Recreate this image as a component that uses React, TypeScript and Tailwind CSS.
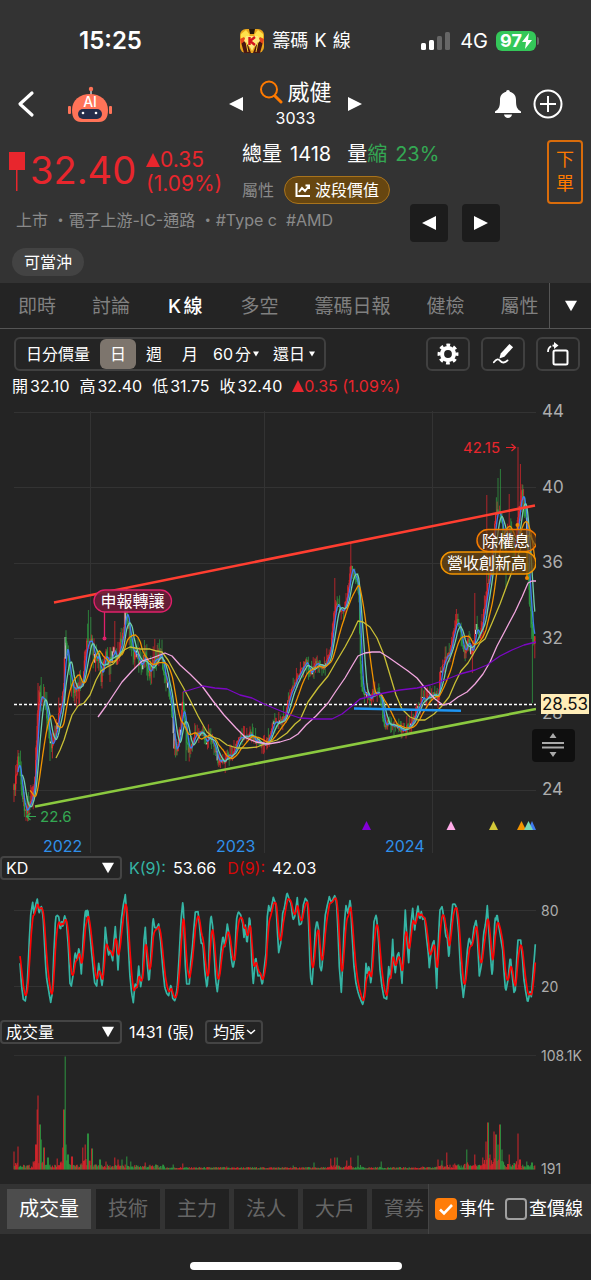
import { useState } from 'react'
import type { ReactNode } from 'react'
import { clsx } from 'clsx'

type Point = [number, number]

const TABS = ['即時', '討論', 'K線', '多空', '籌碼日報', '健檢', '屬性']
const INDICATORS = ['成交量', '技術', '主力', '法人', '大戶', '資券']

const RED = '#e8262d'
const GREEN = '#2fa344'
const STEP = 0.8

// Price path in chart units: x is time, y is the price level (44 at 412, 24 at 790).
const PRICE: Point[] = [
  [14, 790], [16, 778], [18, 757], [20, 775], [22, 790], [24, 804], [26, 810], [29, 805], [31, 800],
  [34, 788], [36, 760], [38, 705], [40, 692], [41, 705], [43, 690], [45, 702], [47, 715], [49, 735],
  [52, 750], [54, 742], [57, 725], [59, 712], [62, 708], [64, 680], [65, 640], [67, 655], [69, 665],
  [71, 688], [74, 692], [77, 688], [80, 690], [83, 682], [85, 652], [88, 640], [91, 637], [93, 655],
  [96, 660], [99, 655], [101, 678], [104, 665], [106, 652], [108, 662], [112, 657], [114, 650],
  [117, 662], [120, 645], [123, 636], [126, 604], [128, 622], [131, 640], [134, 655], [138, 655],
  [141, 668], [145, 655], [149, 675], [153, 660], [156, 660], [160, 652], [163, 666], [166, 682],
  [169, 692], [172, 712], [174, 748], [177, 750], [180, 730], [183, 702], [186, 732], [188, 750],
  [191, 747], [195, 735], [198, 732], [202, 732], [206, 743], [210, 735], [214, 745], [218, 760],
  [223, 762], [228, 755], [232, 757], [236, 745], [240, 738], [245, 737], [250, 733], [254, 740],
  [259, 742], [264, 745], [268, 740], [272, 725], [276, 720], [280, 722], [285, 715], [288, 700],
  [292, 690], [296, 680], [300, 672], [306, 662], [311, 673], [316, 661], [320, 668], [325, 665],
  [330, 655], [333, 622], [336, 602], [339, 608], [343, 612], [346, 600], [349, 584], [351, 565],
  [354, 576], [357, 577], [359, 600], [360, 660], [362, 690], [365, 693], [370, 697], [374, 693],
  [377, 690], [381, 700], [384, 725], [388, 723], [393, 724], [398, 727], [402, 730], [406, 728],
  [410, 724], [414, 717], [418, 708], [422, 695], [426, 700], [430, 696], [434, 694], [438, 698],
  [441, 670], [445, 660], [449, 656], [452, 640], [456, 620], [460, 628], [464, 655], [468, 640],
  [472, 656], [476, 625], [480, 640], [484, 608], [487, 590], [490, 570], [493, 545], [496, 510],
  [500, 515], [503, 532], [506, 543], [509, 532], [512, 545], [515, 552], [518, 515], [520, 497],
  [522, 493], [524, 503], [526, 520], [528, 570], [530, 605], [532, 625], [534, 642], [536, 640],
]

const HIGHS: Point[] = [
  [18, 750], [41, 677], [38, 683], [65, 620], [88, 610], [91, 617], [126, 590], [115, 621], [144, 640],
  [158, 643], [351, 543], [335, 578], [487, 495], [496, 498], [498, 478], [500, 469], [509, 494],
  [518, 447], [520, 464], [456, 609], [475, 593], [376, 675], [422, 688],
]

const LOWS: Point[] = [
  [26, 816], [50, 761], [101, 686], [174, 760], [186, 761], [217, 772], [402, 737], [472, 673],
  [506, 587], [532, 703],
]

const MA60: Point[] = [
  [56, 758], [60, 750], [64, 740], [68, 727], [72, 715], [78, 706], [84, 703], [90, 695], [96, 680],
  [101, 671], [107, 667], [113, 664], [118, 658], [124, 650], [130, 647], [140, 649], [150, 649],
  [157, 651], [162, 652], [168, 660], [175, 673], [183, 687], [190, 700], [198, 716], [207, 732],
  [213, 737], [219, 739], [227, 745], [237, 748], [247, 748], [257, 747], [267, 743], [277, 740],
  [287, 733], [295, 724], [300, 720], [308, 702], [318, 688], [328, 676], [336, 662], [345, 647],
  [352, 634], [358, 621], [363, 622], [370, 627], [377, 638], [384, 655], [390, 675], [396, 695],
  [402, 709], [410, 717], [418, 720], [425, 720], [434, 714], [441, 707], [449, 697], [455, 683],
  [461, 671], [468, 663], [475, 651], [480, 643], [485, 639], [492, 623], [500, 604], [507, 585],
  [514, 566], [520, 550], [526, 537], [530, 535], [535, 545],
]

const MA120: Point[] = [
  [98, 717], [106, 706], [114, 694], [122, 682], [132, 671], [142, 661], [152, 658], [160, 655],
  [165, 653], [172, 656], [180, 665], [190, 674], [202, 686], [213, 701], [224, 715], [236, 728],
  [246, 738], [256, 742], [268, 744], [280, 742], [290, 739], [298, 734], [306, 725], [316, 716],
  [328, 703], [336, 691], [345, 678], [352, 666], [358, 656], [365, 653], [372, 652], [380, 652],
  [388, 657], [398, 664], [408, 671], [417, 678], [425, 688], [435, 699], [443, 705], [450, 703],
  [458, 697], [467, 692], [475, 684], [483, 674], [490, 662], [497, 646], [506, 629], [515, 612],
  [522, 597], [528, 583], [532, 581], [536, 581],
]

const MA240: Point[] = [
  [183, 692], [193, 689], [203, 686], [215, 688], [227, 689], [240, 695], [252, 698], [264, 704],
  [276, 709], [288, 714], [300, 718], [316, 719], [332, 719], [342, 714], [352, 706], [360, 699],
  [372, 696], [384, 693], [400, 690], [417, 688], [430, 685], [445, 680], [460, 674], [475, 670],
  [487, 665], [500, 656], [512, 650], [524, 645], [532, 643], [536, 642],
]

// K line at triple resolution.
const K_LINE: Point[] = [
  [60, 340], [65, 410], [70, 448], [76, 453], [82, 400], [88, 270], [92, 195], [98, 157], [102, 190],
  [108, 160], [112, 147], [117, 192], [121, 175], [125, 168], [130, 210], [134, 290], [139, 380],
  [144, 410], [152, 457], [157, 430], [162, 300], [167, 200], [172, 196], [177, 202], [181, 245],
  [185, 208], [189, 235], [193, 195], [199, 212], [205, 290], [210, 400], [214, 408], [220, 370],
  [225, 305], [231, 330], [237, 290], [244, 372], [250, 260], [255, 188], [258, 182], [260, 200],
  [263, 172], [268, 230], [273, 285], [279, 350], [284, 398], [290, 408], [296, 340], [301, 375],
  [307, 412], [311, 330], [316, 232], [322, 290], [326, 315], [331, 300], [338, 332], [342, 270],
  [346, 230], [350, 290], [354, 360], [358, 290], [364, 210], [369, 170], [376, 134], [380, 190],
  [385, 290], [390, 380], [395, 430], [400, 458], [405, 400], [411, 415], [416, 348], [422, 410],
  [428, 370], [432, 270], [436, 232], [441, 330], [447, 402], [452, 330], [459, 200], [464, 232],
  [470, 235], [476, 222], [482, 275], [488, 350], [494, 410], [500, 430], [506, 437], [513, 402],
  [518, 445], [525, 453], [532, 410], [538, 310], [543, 210], [549, 148], [552, 220], [555, 330],
  [560, 402], [568, 402], [572, 340], [577, 295], [582, 230], [586, 186], [594, 185], [599, 230],
  [603, 280], [609, 280], [614, 360], [621, 418], [626, 350], [629, 240], [633, 192], [638, 230],
  [643, 320], [647, 390], [652, 425], [658, 370], [663, 300], [669, 255], [674, 290], [682, 222],
  [688, 260], [693, 320], [699, 357], [705, 320], [709, 210], [715, 185], [722, 195], [728, 220],
  [732, 262], [736, 225], [741, 287], [749, 192], [753, 270], [757, 370], [760, 400], [767, 317],
  [774, 378], [781, 375], [787, 407], [793, 350], [798, 310], [802, 200], [806, 167], [811, 187],
  [820, 142], [828, 165], [832, 240], [836, 308], [842, 280], [848, 190], [853, 175], [861, 127],
  [868, 150], [873, 160], [879, 210], [884, 200], [892, 143], [897, 225], [905, 220], [910, 165],
  [916, 145], [923, 155], [927, 250], [931, 380], [936, 403], [941, 330], [946, 240], [951, 210],
  [956, 240], [960, 350], [965, 365], [970, 290], [975, 200], [981, 170], [988, 140], [994, 158],
  [1004, 137], [1009, 150], [1013, 220], [1018, 350], [1024, 427], [1029, 320], [1033, 220],
  [1038, 167], [1044, 190], [1051, 145], [1056, 250], [1062, 350], [1068, 400], [1075, 430],
  [1083, 452], [1089, 465], [1094, 420], [1098, 340], [1102, 370], [1107, 346], [1113, 408],
  [1118, 300], [1122, 215], [1129, 193], [1135, 260], [1140, 360], [1146, 410], [1152, 443],
  [1160, 447], [1166, 350], [1172, 385], [1178, 268], [1182, 340], [1186, 368], [1191, 318],
  [1196, 308], [1201, 340], [1206, 400], [1211, 280], [1216, 180], [1221, 270], [1226, 338],
  [1232, 230], [1238, 175], [1244, 240], [1250, 190], [1254, 168], [1259, 210], [1264, 185],
  [1268, 208], [1274, 205], [1280, 268], [1285, 310], [1288, 353], [1294, 300], [1298, 280],
  [1302, 272], [1306, 330], [1310, 415], [1315, 270], [1320, 180], [1326, 170], [1333, 210],
  [1337, 258], [1342, 265], [1347, 332], [1352, 230], [1358, 163], [1365, 162], [1370, 175],
  [1376, 250], [1382, 370], [1390, 442], [1396, 390], [1401, 310], [1407, 262], [1415, 290],
  [1422, 232], [1429, 208], [1433, 280], [1438, 378], [1445, 340], [1451, 250], [1457, 220],
  [1462, 167], [1467, 250], [1473, 340], [1477, 383], [1482, 260], [1485, 202], [1488, 210],
  [1491, 190], [1496, 225], [1502, 262], [1508, 300], [1513, 380], [1517, 425], [1524, 390],
  [1531, 318], [1537, 380], [1542, 427], [1546, 420], [1550, 330], [1554, 270], [1562, 270],
  [1567, 320], [1572, 390], [1578, 430], [1583, 458], [1590, 425], [1594, 440], [1600, 360],
  [1606, 283],
]

// Volume peaks: x and bar height.
const VOLUME_PEAKS: Point[] = [
  [14, 18], [18, 23], [33, 8], [36, 25], [37, 60], [38, 74], [40, 45], [41, 30], [44, 22], [48, 12],
  [57, 11], [63, 22], [64, 60], [65, 113], [66, 25], [68, 15], [72, 13], [83, 22], [85, 25], [88, 36],
  [92, 21], [100, 10], [106, 8], [115, 12], [118, 10], [122, 10], [127, 13], [131, 8], [145, 7],
  [158, 4], [173, 5], [183, 6], [227, 3], [293, 4], [314, 7], [331, 11], [335, 12], [337, 12],
  [347, 9], [351, 12], [358, 14], [381, 8], [423, 3], [438, 10], [442, 9], [447, 17], [455, 6],
  [467, 20], [475, 15], [483, 12], [486, 28], [488, 47], [490, 15], [494, 38], [496, 35], [498, 25],
  [500, 45], [502, 20], [509, 15], [518, 36], [520, 10], [527, 8], [532, 7],
]

function valueAt(points: Point[], x: number): number {
  const i = points.findIndex((p) => p[0] >= x)
  if (i <= 0) return i === 0 ? points[0][1] : points[points.length - 1][1]
  const [x0, y0] = points[i - 1]
  const [x1, y1] = points[i]
  return y0 + ((y1 - y0) * (x - x0)) / (x1 - x0)
}

function noise(seed: number): number {
  const v = Math.sin(seed * 12.9898) * 43758.5453
  return v - Math.floor(v)
}

function toPath(points: Point[]): string {
  return points.map(([x, y], i) => `${i === 0 ? 'M' : 'L'}${x.toFixed(1)} ${y.toFixed(1)}`).join('')
}

interface Candle {
  x: number
  open: number
  close: number
  high: number
  low: number
}

function buildCandles(): Candle[] {
  const candles: Candle[] = []
  let previous = PRICE[0][1]
  for (let i = 0; 14 + i * STEP <= 535.5; i++) {
    const x = 14 + i * STEP
    const swing = x > 480 || x < 165 ? 11 : 7
    const close = valueAt(PRICE, x) + (noise(i) - 0.5) * swing
    candles.push({
      x,
      open: previous,
      close,
      high: Math.min(previous, close) - noise(i + 900) ** 2 * swing * 1.6,
      low: Math.max(previous, close) + noise(i + 1800) ** 2 * swing * 1.5,
    })
    previous = close
  }
  for (const [x, y] of HIGHS) {
    const c = candles[Math.round((x - 14) / STEP)]
    c.high = Math.min(c.high, y)
  }
  for (const [x, y] of LOWS) {
    const c = candles[Math.round((x - 14) / STEP)]
    c.low = Math.max(c.low, y)
  }
  return candles
}

function average(candles: Candle[], days: number): Point[] {
  return candles.slice(days).map((c, i) => {
    const window = candles.slice(i + 1, i + days + 1)
    return [c.x, window.reduce((sum, w) => sum + w.close, 0) / days]
  })
}

function buildKd() {
  const k: Point[] = []
  const d: Point[] = []
  let smooth = 310
  for (let x = 60; x <= 1606; x += 2) {
    const y = valueAt(K_LINE, x)
    smooth += (y - smooth) * 0.29
    k.push([x / 3, 850 + y / 3])
    d.push([x / 3, 850 + smooth / 3])
  }
  return { k, d }
}

function volumeHeight(x: number, i: number): number {
  let height = 1 + noise(i + 77) * (x < 165 || x > 435 ? 4 : 1.5)
  for (const [px, peak] of VOLUME_PEAKS) {
    const gap = Math.abs(px - x)
    if (gap < 0.5) height = Math.max(height, peak)
    else if (gap < 7) height = Math.max(height, Math.min(peak, 30) * 0.5 * noise(i + px) * (1 - gap / 7))
  }
  return height
}

const CANDLES = buildCandles()
const KD = buildKd()

function Triangle({ className, d }: { className?: string; d: string }) {
  return (
    <svg viewBox="0 0 14 14" className={className} fill="currentColor" aria-hidden="true">
      <path d={d} />
    </svg>
  )
}

const LEFT = 'M0 7 14 0V14Z'
const RIGHT = 'M14 7 0 0V14Z'
const UP = 'M7 0 14 14H0Z'
const DOWN = 'M0 1H14L7 13Z'

function StatusBar() {
  return (
    <div className="grid h-20 grid-cols-3 items-center pt-0.5 text-white">
      <span className="pl-[79px] text-2xl font-semibold">15:25</span>
      <span className="flex items-center justify-center gap-2 text-lg">
        <svg viewBox="0 0 24 24" className="size-6" aria-hidden="true">
          <rect width="24" height="24" rx="6" fill="#e9a51c" />
          <path d="M1 5 6 1l4 5-6 6-3-1Z" fill="#ffe14a" />
          <path d="m23 5-5-4-4 5 6 6 3-1Z" fill="#ffe14a" />
          <path d="M9 0h6l-1 5h-4Z" fill="#24180c" />
          <path d="m1 13 5-2 5 13H4Z" fill="#4a1712" />
          <path d="m23 13-5-2-5 13h7Z" fill="#4a1712" />
          <path d="M0 10 4 8l2 3-5 4ZM24 10l-4-2-2 3 5 4Z" fill="#e5481c" />
          <path d="M6 7h12l2 5-6 6-2 4-2-4-6-6Z" fill="#ffe97c" />
          <path d="M9.500 8v8M15 8l-5 4 5 4" fill="none" stroke="#d3121b" strokeWidth="2.400" />
          <path d="m6 13 2 10M18 13l-2 10" stroke="#f3c52c" strokeWidth="1" />
        </svg>
        <span>
          籌碼<span className="mx-1">K</span>線
        </span>
      </span>
      <span className="flex items-center justify-end gap-2 pr-13 text-xl">
        <svg viewBox="0 0 30 20" className="h-5 w-8" aria-hidden="true">
          <rect x="0" y="12" width="5" height="7" rx="1.500" fill="#fff" />
          <rect x="8" y="9" width="5" height="10" rx="1.500" fill="#fff" />
          <rect x="16" y="5" width="5" height="14" rx="1.500" fill="#666" />
          <rect x="24" y="1" width="5" height="18" rx="1.500" fill="#666" />
        </svg>
        4G
        <span className="flex items-center gap-px">
          <span className="flex h-5 w-10 items-center justify-center rounded-md bg-[#34c759] text-lg font-bold">
            97
            <svg viewBox="0 0 10 16" className="h-4 w-2.5" fill="#fff" aria-hidden="true">
              <path d="M7 0 0 9h4L3 16l7-9H6Z" />
            </svg>
          </span>
          <span className="h-2 w-0.5 rounded-r bg-[#666]" />
        </span>
      </span>
    </div>
  )
}

function NavBar() {
  return (
    <div className="flex h-12 items-center justify-between px-4">
      <div className="flex w-32 items-center gap-8">
        <button aria-label="返回" className="text-white">
          <svg viewBox="0 0 20 28" className="h-7 w-5" fill="none" stroke="currentColor" strokeWidth="3.200" strokeLinecap="round" strokeLinejoin="round">
            <path d="M16 3 4 14l12 11" />
          </svg>
        </button>
        <button aria-label="AI 助理">
          <svg viewBox="0 0 44 36" className="h-9 w-11">
            <path d="M23 4v6" stroke="#cfcfcf" strokeWidth="1.500" />
            <circle cx="23" cy="3" r="2.200" fill="#ff7358" />
            <rect x="0" y="20" width="3" height="8" rx="1" fill="#ff7358" />
            <rect x="41" y="20" width="3" height="8" rx="1" fill="#ff7358" />
            <path d="M4 24C4 14 12 8 22 8s18 6 18 16c0 8-3 12-9 12H13c-6 0-9-4-9-12Z" fill="#ff7358" />
            <rect x="10" y="23" width="24" height="10" rx="5" fill="#232c4a" />
            <circle cx="15" cy="27" r="1.300" fill="#fff" />
            <circle cx="28" cy="27" r="1.300" fill="#fff" />
            <text x="22" y="21" textAnchor="middle" fontSize="14" fontWeight="500" fill="#fff">AI</text>
          </svg>
        </button>
      </div>
      <div className="flex items-center gap-4 text-white">
        <button aria-label="上一檔">
          <Triangle d={LEFT} className="size-3.5" />
        </button>
        <div className="flex flex-col items-center">
          <button className="flex items-center gap-1 text-[22px] leading-7">
            <svg viewBox="0 0 24 24" className="size-6" fill="none" stroke="#ff7a00" strokeLinecap="round">
              <circle cx="10" cy="9.500" r="8" strokeWidth="2" />
              <path d="m16 16 6 6" strokeWidth="3" />
            </svg>
            威健
          </button>
          <span className="text-base leading-6">3033</span>
        </div>
        <button aria-label="下一檔">
          <Triangle d={RIGHT} className="size-3.5" />
        </button>
      </div>
      <div className="flex w-32 items-center justify-end gap-3 pr-3 text-white">
        <button aria-label="通知">
          <svg viewBox="0 0 26 28" className="h-7 w-6.5" fill="currentColor">
            <path d="M13 0c1.200 0 1.800.8 1.800 1.800C19 2.800 21 6 21 10c0 7 1 9 5 11.500V23H0v-1.500C4 19 5 17 5 10c0-4 2-7.200 6.200-8.200C11.200.8 11.800 0 13 0ZM9 24.500h8c-.3 2.200-2 3.500-4 3.500s-3.700-1.300-4-3.500Z" />
          </svg>
        </button>
        <button aria-label="加入自選">
          <svg viewBox="0 0 30 30" className="size-7.5" fill="none" stroke="currentColor" strokeWidth="2">
            <circle cx="15" cy="15" r="13.500" />
            <path d="M15 7v16M7 15h16" />
          </svg>
        </button>
      </div>
    </div>
  )
}

function Quote() {
  return (
    <section className="flex items-start px-2 pt-3 text-[#e8262d]">
      <svg viewBox="0 0 18 40" className="mt-3 h-10 w-4.5" fill="currentColor" aria-hidden="true">
        <path d="M1 0h16v18H1ZM8 18h1.500v21H8Z" />
      </svg>
      <strong className="w-30 pt-1 pl-1 text-[38px] leading-13 font-normal">32.40</strong>
      <p className="w-24 pt-2 text-[21px] leading-6">
        <span className="flex items-center">
          <Triangle d={UP} className="size-3.5" />
          0.35
        </span>
        (1.09%)
      </p>
      <div className="flex-1">
        <p className="flex gap-2 text-xl leading-7 text-white">
          <span>總量</span>
          <span>1418</span>
          <span className="pl-2">
            量<span className="text-[#34a853]">縮</span>
          </span>
          <span className="text-[#34a853]">23%</span>
        </p>
        <div className="flex items-center gap-2.5 pt-2 text-base">
          <span className="text-[#8a8a8a]">屬性</span>
          <button className="flex h-7 items-center gap-1 rounded-full border border-[#a8731c] bg-[#674610] px-2.5 text-white">
            <svg viewBox="0 0 16 16" className="size-4" fill="none" stroke="currentColor" strokeWidth="2" aria-hidden="true">
              <path d="M1.500 1v13H15M4 10l3-4 3 3 4-5M10.500 3.500H14V7" />
            </svg>
            波段價值
          </button>
        </div>
      </div>
      <button className="flex h-16 w-9 flex-col items-center justify-center rounded border-2 border-[#d96c0b] text-lg leading-6 text-[#ff7a00]">
        <span>下</span>
        <span>單</span>
      </button>
    </section>
  )
}

function Tags() {
  return (
    <section className="px-3 pb-[7px]">
      <div className="flex items-start">
        <p className="w-[398px] pt-1 pl-1 text-base whitespace-pre text-[#8a8a8a]">
          上市 ・電子上游-IC-通路 ・#Type c  #AMD
        </p>
        <div className="flex gap-3.5 text-white">
          <button aria-label="前一檔" className="grid h-9.5 w-9.5 place-items-center rounded bg-[#1c1c1c]">
            <Triangle d={LEFT} className="size-3.5" />
          </button>
          <button aria-label="後一檔" className="grid h-9.5 w-9.5 place-items-center rounded bg-[#1c1c1c]">
            <Triangle d={RIGHT} className="size-3.5" />
          </button>
        </div>
      </div>
      <span className="mt-1.5 inline-flex h-7 items-center rounded-full bg-[#434343] px-3 text-base text-white">
        可當沖
      </span>
    </section>
  )
}

function Tabs() {
  const [active, setActive] = useState('K線')
  return (
    <nav className="flex h-11.5 border-b border-[#555] text-[19px]">
      <div className="flex flex-1 overflow-hidden">
        {TABS.map((tab) => (
          <button
            key={tab}
            onClick={() => setActive(tab)}
            className={clsx('shrink-0 pt-1', tab === active ? 'px-5 font-medium text-white' : 'px-[18px] text-[#808080]')}
          >
            {tab}
          </button>
        ))}
      </div>
      <button aria-label="更多分頁" className="grid w-10.5 place-items-center border-l border-[#555] text-white">
        <Triangle d={DOWN} className="size-3" />
      </button>
    </nav>
  )
}

function ToolButton({ label, children }: { label: string; children: ReactNode }) {
  return (
    <button aria-label={label} className="grid h-8.5 w-11 place-items-center rounded-md border-2 border-[#404040] text-white">
      {children}
    </button>
  )
}

function Toolbar() {
  return (
    <div className="flex items-center justify-between pt-2 pr-[11px] pl-3.5 text-base text-white">
      <div className="flex h-8.5 items-stretch rounded-md border-2 border-[#404040]">
        <button className="w-21">日分價量</button>
        <button className="w-9 rounded-md bg-[#7d756d]">日</button>
        <button className="w-9">週</button>
        <button className="w-9">月</button>
        <button className="flex w-14 items-center justify-center gap-0.5">
          60分
          <Triangle d={DOWN} className="size-1.5" />
        </button>
        <button className="flex w-15 items-center justify-center gap-1">
          還日
          <Triangle d={DOWN} className="size-1.5" />
        </button>
      </div>
      <div className="flex gap-[11px]">
        <ToolButton label="設定">
          <svg viewBox="0 0 24 24" className="size-5.5" fill="none" stroke="currentColor">
            <circle cx="12" cy="12" r="6.500" strokeWidth="4.500" />
            <circle cx="12" cy="12" r="9.600" strokeWidth="3.600" strokeDasharray="4 3.540" strokeDashoffset="2" />
          </svg>
        </ToolButton>
        <ToolButton label="畫線">
          <svg viewBox="0 0 24 24" className="size-5.5">
            <path d="m19 1 4 3.500L13.500 15 8 17l1.500-5.500Z" fill="currentColor" />
            <path d="M2 21c3-4 5-4 7-1.500s5 2.500 8-.5" fill="none" stroke="currentColor" strokeWidth="2" strokeLinecap="round" />
          </svg>
        </ToolButton>
        <ToolButton label="旋轉">
          <svg viewBox="0 0 24 24" className="size-6" fill="none" stroke="currentColor">
            <rect x="7.500" y="8.500" width="14" height="14" rx="1.500" strokeWidth="2" />
            <path d="M2 10c0-4 2-6.500 7-6.500" strokeWidth="1.800" strokeDasharray="7 1.500" />
            <path d="m8 0 4.500 3.500L8 7Z" fill="currentColor" stroke="none" />
          </svg>
        </ToolButton>
      </div>
    </div>
  )
}

function Ohlc() {
  return (
    <p className="flex h-7 items-center gap-2.5 px-3 pt-0.5 text-base text-white">
      <span>開32.10</span>
      <span>高32.40</span>
      <span>低31.75</span>
      <span>收32.40</span>
      <span className="flex items-center text-[#e8262d]">
        <Triangle d={UP} className="size-3" />
        0.35 (1.09%)
      </span>
    </p>
  )
}

function PriceChart() {
  return (
    <svg viewBox="0 399 591 457" className="block w-full" role="img" aria-label="日K線圖">
      <defs>
        <clipPath id="plot">
          <rect x="0" y="399" width="536" height="457" />
        </clipPath>
      </defs>
      <g stroke="#333" strokeWidth="1">
        {[412, 487, 563, 638, 714, 790].map((y) => (
          <path key={y} d={`M14 ${y + 0.5}H536`} />
        ))}
        {[90, 264, 432].map((x) => (
          <path key={x} d={`M${x + 0.5} 411V853`} />
        ))}
      </g>
      <g fill="#adadad" fontSize="17">
        {[44, 40, 36, 32, 28, 24].map((label, i) => (
          <text key={label} x="542" y={417 + Math.round(i * 75.6)}>
            {label}
          </text>
        ))}
      </g>
      <path d="M14 704.500H536" stroke="#fff" strokeWidth="1.500" strokeDasharray="3 2" />
      <g clipPath="url(#plot)" fill="none">
        {CANDLES.map((c, i) => {
          const up = c.close <= c.open
          const pale = noise(i + 55) > 0.93
          const color = pale ? '#d8d8d8' : up ? RED : GREEN
          return (
            <g key={c.x} stroke={color}>
              {!pale && <path d={`M${c.x} ${c.high}V${c.low}`} strokeWidth="0.900" opacity="0.800" />}
              <path d={`M${c.x} ${c.open}V${c.close}`} strokeWidth="1.200" />
            </g>
          )
        })}
        <g strokeWidth="1.300" strokeLinejoin="round">
          <path d={toPath(average(CANDLES, 5))} stroke="#3f7bf0" />
          <path d={toPath(average(CANDLES, 10))} stroke="#6fcfa8" />
          <path d={toPath(average(CANDLES, 20))} stroke="#f29400" />
          <path d={toPath(MA60)} stroke="#c9bf35" />
          <path d={toPath(MA120)} stroke="#f2a6df" />
          <path d={toPath(MA240)} stroke="#7c07c4" />
        </g>
        <g strokeWidth="2.600">
          <path d="M54 602.500 535 505.500" stroke="#ff3e30" />
          <path d="M35 806.500 536 709" stroke="#8bc93f" />
          <path d="M354 708.500 461 710.800" stroke="#1e96f5" />
        </g>
      </g>

      {/* event markers */}
      <g clipPath="url(#plot)" fontSize="16">
        <path d="M104.500 612v26" stroke="#e0206a" strokeWidth="1.300" />
        <circle cx="104.500" cy="638.500" r="2" fill="#e0206a" />
        <rect x="94" y="590" width="77.500" height="22" rx="11" fill="#6b1d38" fillOpacity="0.900" stroke="#e0206a" strokeWidth="1.300" />
        <text x="132.500" y="607" textAnchor="middle" fill="#fff">申報轉讓</text>
        <path d="M517.500 525v5M527 551v27" stroke="#f28500" strokeWidth="1.300" />
        <circle cx="517.500" cy="525" r="2" fill="#f28500" />
        <circle cx="527" cy="578" r="2" fill="#f28500" />
        <rect x="477" y="529.500" width="60" height="22" rx="11" fill="#6b3a10" fillOpacity="0.650" stroke="#f27a00" strokeWidth="1.500" />
        <text x="482" y="547" fill="#fff">除權息</text>
        <rect x="441" y="552" width="95" height="22" rx="11" fill="#6b4610" fillOpacity="0.750" stroke="#f29400" strokeWidth="1.500" />
        <text x="447" y="569" fill="#fff">營收創新高</text>
      </g>

      <g fontSize="15">
        <text x="463" y="453" fill={RED}>42.15</text>
        <path d="M506 447.500h9.500m-4-3.500 4 3.500-4 3.500" fill="none" stroke={RED} strokeWidth="1.200" />
        <text x="40" y="822" fill="#34a853">22.6</text>
        <path d="M36 816.500h-9.500m4-3.500-4 3.500 4 3.500" fill="none" stroke="#34a853" strokeWidth="1.200" />
      </g>

      <rect x="541" y="694" width="48" height="20" fill="#ffedb8" />
      <text x="565" y="710" textAnchor="middle" fontSize="17" fill="#111">28.53</text>

      <rect x="532" y="729" width="43" height="33" rx="4" fill="#0f0f0f" />
      <path d="M542 743h22M542 747.500h22" stroke="#aaa" strokeWidth="1.800" />
      <path d="m553 733 3.500 5h-7ZM553 757l3.500-5h-7Z" fill="#aaa" />

      <path d="m366.500 821 4.500 9h-9Z" fill="#8400d8" />
      <path d="m451 821 4.500 9h-9Z" fill="#ffabe8" />
      <path d="m493.500 821 4.500 9h-9Z" fill="#d2c838" />
      <path d="m532 821 4 9h-8Z" fill="#3f7bf0" />
      <path d="m521.500 821 4.500 9h-9Z" fill="#f29400" />
      <path d="m528.500 821 4.500 9h-9Z" fill="#78d8b4" />

      <g fill="#3090ea" fontSize="16">
        <text x="43" y="852">2022</text>
        <text x="216" y="852">2023</text>
        <text x="385" y="852">2024</text>
      </g>
    </svg>
  )
}

function IndicatorSelect({ label, options }: { label: string; options: string[] }) {
  return (
    <span className="relative block w-[122px]">
      <select aria-label={label} className="block h-6 w-full appearance-none rounded border-2 border-[#444] bg-transparent pl-1 text-base leading-5 text-white">
        {options.map((o) => (
          <option key={o}>{o}</option>
        ))}
      </select>
      <Triangle d={DOWN} className="pointer-events-none absolute top-1.5 right-2 size-3 text-white" />
    </span>
  )
}

function KdPanel() {
  return (
    <section>
      <div className="flex h-6 items-center gap-[7px] text-base text-white">
        <IndicatorSelect label="副圖指標" options={['KD', 'MACD', 'RSI']} />
        <span className="text-[#35b5a5]">K(9):</span>
        <span>53.66</span>
        <span className="pl-1 text-[#d80808]">D(9):</span>
        <span>42.03</span>
      </div>
      <svg viewBox="0 880 591 140" className="block w-full" role="img" aria-label="KD 指標">
        <path d="M14 910.500H536M14 986.500H536" stroke="#333" />
        <g fill="none" strokeLinejoin="round">
          <path d={toPath(KD.k)} stroke="#35b5a5" strokeWidth="1.700" />
          <path d={toPath(KD.d)} stroke="#ff0404" strokeWidth="1.700" />
        </g>
        <g fill="#adadad" fontSize="14">
          <text x="541" y="916">80</text>
          <text x="541" y="992">20</text>
        </g>
      </svg>
    </section>
  )
}

function VolumePanel() {
  return (
    <section>
      <div className="flex h-6 items-center gap-[7px] text-base text-white">
        <IndicatorSelect label="量能指標" options={['成交量', '成交值']} />
        <span>1431 (張)</span>
        <button className="ml-1 flex h-6 w-[58px] items-center justify-center gap-px rounded border-2 border-[#444]">
          均張
          <svg viewBox="0 0 10 6" className="h-1.5 w-2.5" fill="none" stroke="currentColor" strokeWidth="1.500">
            <path d="m1 1 4 3.500L9 1" />
          </svg>
        </button>
      </div>
      <svg viewBox="0 1044 591 140" className="block w-full" role="img" aria-label="成交量圖">
        <path d="M14 1055.500H536" stroke="#303030" />
        {CANDLES.map((c, i) => (
          <path
            key={c.x}
            d={`M${c.x} 1169.500v-${volumeHeight(c.x, i)}`}
            stroke={c.close <= c.open && Math.abs(c.x - 65) > 0.6 ? RED : GREEN}
            strokeWidth="0.900"
          />
        ))}
        <g fill="#adadad" fontSize="14">
          <text x="541" y="1061">108.1K</text>
          <text x="541" y="1174">191</text>
        </g>
      </svg>
    </section>
  )
}

function CheckOption({ label, defaultChecked }: { label: string; defaultChecked?: boolean }) {
  return (
    <label className="flex items-center gap-0.5 text-lg whitespace-nowrap text-white">
      <span className="grid place-items-center">
        <input
          type="checkbox"
          defaultChecked={defaultChecked}
          className="peer col-start-1 row-start-1 size-5.5 appearance-none rounded border-2 border-[#a0a0a0] checked:border-[#ff7d0a] checked:bg-[#ff7d0a]"
        />
        <svg viewBox="0 0 16 16" className="pointer-events-none invisible col-start-1 row-start-1 size-4 peer-checked:visible" fill="none" stroke="currentColor" strokeWidth="2.600">
          <path d="m2 8.500 4 4L14 4" />
        </svg>
      </span>
      {label}
    </label>
  )
}

function BottomBar() {
  const [active, setActive] = useState('成交量')
  return (
    <div className="flex h-12.5 items-stretch bg-[#333]">
      <div className="flex min-w-0 flex-1 items-center gap-[5px] overflow-hidden border-r border-[#444] pl-[7px] text-xl">
        {INDICATORS.map((name) => (
          <button
            key={name}
            onClick={() => setActive(name)}
            className={clsx(
              'h-10 shrink-0 px-3',
              name === active ? 'bg-[#4d4d4d] text-white' : 'bg-[#212121] text-[#666]',
            )}
          >
            {name}
          </button>
        ))}
      </div>
      <div className="flex items-center gap-2.5 pr-2 pl-1.5">
        <CheckOption label="事件" defaultChecked />
        <CheckOption label="查價線" />
      </div>
    </div>
  )
}

export default function App() {
  return (
    <main className="min-h-screen bg-[#242424] font-['Inter','Noto_Sans_CJK_TC',sans-serif] [text-autospace:normal]">
      <header className="bg-[#333]">
        <StatusBar />
        <NavBar />
        <Quote />
        <Tags />
      </header>
      <Tabs />
      <Toolbar />
      <Ohlc />
      <PriceChart />
      <KdPanel />
      <VolumePanel />
      <BottomBar />
      <div className="flex justify-center pt-7 pb-3">
        <span className="h-2 w-53 rounded-full bg-white" />
      </div>
    </main>
  )
}
